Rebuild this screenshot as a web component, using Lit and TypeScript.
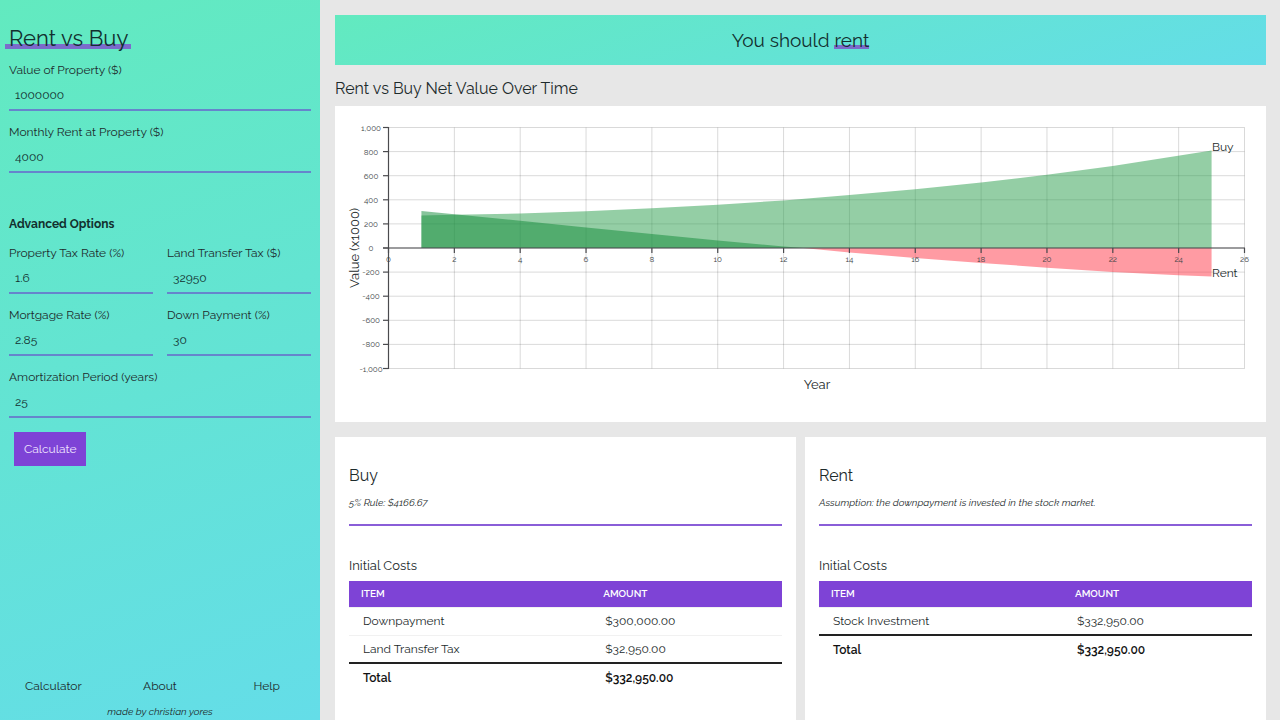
import { LitElement, html, svg, css } from "lit";
import { customElement, property } from "lit/decorators.js";

const FONT = css`Raleway, Lato, "Open Sans", sans-serif`;

type Point = [number, number];

const BUY: Point[] = [[1, 270], [2, 275], [4, 287], [6, 306], [8, 330], [10, 359], [12, 395], [14, 439], [16, 488], [18, 544], [20, 607], [22, 681], [25, 810]];
const RENT: Point[] = [[1, 307], [2, 280], [4, 226], [6, 171], [8, 116], [10, 63], [12, 13], [12.6, 0], [14, -37], [16, -82], [18, -124], [20, -163], [22, -200], [24, -226], [25, -236]];

@customElement("value-chart")
class ValueChart extends LitElement {
  static styles = css`
    :host { display: block; }
    .plot { display: block; width: 100%; font-family: ${FONT}; fill: #1d2b2c; }
    .grid { stroke: #000; stroke-opacity: 0.15; stroke-width: 1; }
    .axis { stroke: #4a4a4e; stroke-width: 1.2; }
    .buy { fill: rgb(41, 157, 75); fill-opacity: 0.5; }
    .rent { fill: rgb(16, 138, 55); fill-opacity: 0.5; }
    .loss { fill: rgb(255, 55, 71); fill-opacity: 0.5; }
    .tick { font-size: 8px; fill: #3c4446; text-anchor: middle; }
    .series { font-size: 12px; }
    .name { font-size: 13px; text-anchor: middle; }
  `;

  private x(v: number) { return 53.5 + (v * 856) / 26; }
  private y(v: number) { return 142 - (v * 241) / 2000; }

  private area(points: Point[]) {
    const first = points[0][0];
    const last = points[points.length - 1][0];
    return [[first, 0], ...points, [last, 0]].map(([a, b]) => `${this.x(a)},${this.y(b)}`).join(" ");
  }

  render() {
    const xs = Array.from({ length: 14 }, (_, i) => i * 2);
    const ys = Array.from({ length: 11 }, (_, i) => 1000 - i * 200);
    return html`
      <svg class="plot" viewBox="0 0 931 316" role="img" aria-label="Rent vs Buy Net Value Over Time">
        ${xs.map((v) => svg`<line class="grid" x1=${this.x(v)} x2=${this.x(v)} y1="21.5" y2="262.5" />`)}
        ${ys.map((v) => svg`<line class="grid" x1="53.5" x2="909.5" y1=${this.y(v)} y2=${this.y(v)} />`)}
        <polygon class="buy" points=${this.area(BUY)} />
        <polygon class="rent" points=${this.area(RENT.filter((p) => p[1] >= 0))} />
        <polygon class="loss" points=${this.area(RENT.filter((p) => p[1] <= 0))} />
        <line class="axis" x1="53.5" x2="53.5" y1="21" y2="263" />
        <line class="axis" x1="48" x2="910" y1="142" y2="142" />
        ${ys.map((v) => svg`
          <line class="axis" x1="48" x2="53.5" y1=${this.y(v)} y2=${this.y(v)} />
          <text class="tick" x="36" y=${this.y(v) + 3}>${v.toLocaleString("en-US")}</text>`)}
        ${xs.map((v) => svg`
          <line class="axis" x1=${this.x(v)} x2=${this.x(v)} y1="142" y2="147" />
          <text class="tick" x=${this.x(v)} y="156">${v}</text>`)}
        <text class="series" x="877" y="45">Buy</text>
        <text class="series" x="877" y="171">Rent</text>
        <text class="name" x="482" y="283">Year</text>
        <text class="name" transform="translate(24 142) rotate(-90)">Value (x1000)</text>
      </svg>
    `;
  }
}

@customElement("cost-card")
class CostCard extends LitElement {
  @property() heading = "";
  @property() note = "";
  @property({ attribute: false }) rows: [string, string][] = [];
  @property() total = "";

  static styles = css`
    :host { display: block; background: #fff; padding: 24px 14px; box-sizing: border-box; }
    .title { margin: 0; font-size: 16px; line-height: 30px; font-weight: 400; }
    .note { margin: 2px 0 0; font-size: 10px; line-height: 20px; font-style: italic; }
    .rule { margin: 11px 0 0; border: 0; border-top: 2px solid #8a5ed8; }
    .costs { width: 100%; margin-top: 28px; border-collapse: collapse; font-size: 12px; }
    .caption { text-align: left; font-size: 13px; line-height: 24px; font-weight: 400; padding-bottom: 3px; }
    .head { height: 26px; padding: 0 12px; box-sizing: border-box; text-align: left; font-size: 10px; font-weight: 600; color: #fff; background: #7e43d6; text-transform: uppercase; }
    .cell { height: 28px; padding: 0 14px; box-sizing: border-box; text-align: left; font-weight: 400; border-top: 1px solid #f1f1f1; }
    .sum .cell { border-top: 2px solid #222; font-weight: 600; color: #111; }
  `;

  render() {
    return html`
      <h2 class="title">${this.heading}</h2>
      <p class="note">${this.note}</p>
      <hr class="rule" />
      <table class="costs">
        <caption class="caption">Initial Costs</caption>
        <thead>
          <tr><th class="head" scope="col">Item</th><th class="head" scope="col">Amount</th></tr>
        </thead>
        <tbody>
          ${this.rows.map(([name, amount]) => html`<tr><td class="cell">${name}</td><td class="cell">${amount}</td></tr>`)}
          <tr class="sum"><th class="cell" scope="row">Total</th><td class="cell">${this.total}</td></tr>
        </tbody>
      </table>
    `;
  }
}

@customElement("app-root")
class AppRoot extends LitElement {
  static styles = css`
    :host {
      display: grid;
      grid-template-columns: 1fr 3fr;
      height: 100vh;
      background: #e7e7e7;
      color: #1d2b2c;
      font-family: ${FONT};
      font-size: 12px;
    }
    .side {
      display: flex;
      flex-direction: column;
      min-width: 0;
      box-sizing: border-box;
      padding: 20px 9px 0;
      overflow: hidden;
      background: linear-gradient(160deg, #62eabf, #64dde8);
    }
    .brand { margin: 0; font-size: 22px; line-height: 36px; font-weight: 400; color: #12302f; }
    .mark { background: linear-gradient(transparent 73%, #7b6bcb 73%, #7b6bcb 93%, transparent 93%); }
    .brand .mark { margin-left: -4px; padding: 0 3px 0 4px; }
    .form { display: flex; flex-direction: column; margin-top: 4px; }
    .fields { display: grid; grid-template-columns: 1fr 1fr; gap: 11px 14px; margin: 0; padding: 0; border: 0; }
    .field { display: flex; flex-direction: column; min-width: 0; }
    .wide { grid-column: 1 / -1; }
    .label { line-height: 20px; }
    .input {
      height: 31px;
      min-width: 0;
      box-sizing: border-box;
      padding: 0 6px;
      border: 0;
      border-bottom: 2px solid #6685cc;
      border-radius: 0;
      outline: 0;
      background: none;
      color: #12302f;
      font: 12px ${FONT};
    }
    .advanced { margin: 41px 0 9px; font-size: 12px; line-height: 20px; font-weight: 700; color: #12302f; }
    .submit {
      align-self: flex-start;
      height: 34px;
      margin: 14px 5px;
      padding: 0 10px;
      border: 0;
      background: #7e43d6;
      color: #f0e6ff;
      font: 12px ${FONT};
    }
    .foot { margin: auto -9px 0; text-align: center; }
    .nav { display: grid; grid-template-columns: repeat(3, 1fr); line-height: 20px; }
    .link { color: inherit; text-decoration: none; }
    .credit { margin: 8px 0 0; font-size: 10px; line-height: 16px; font-style: italic; }
    .main { min-width: 0; box-sizing: border-box; padding: 15px 14px 0 15px; overflow-y: auto; scrollbar-width: none; display: flex; flex-direction: column; }
    .banner { padding: 7px 0; text-align: center; background: linear-gradient(160deg, #62eabf, #64dde8); }
    .verdict { margin: 0; font-size: 19px; line-height: 36px; font-weight: 400; color: #12302f; }
    .heading { margin: 9px 0 2px; font-size: 16px; line-height: 30px; font-weight: 400; }
    .chart { background: #fff; }
    .cards { flex: 1; display: grid; grid-template-columns: 1fr 1fr; gap: 9px; margin-top: 15px; }
  `;

  private field(id: string, label: string, value: string, wide = false) {
    return html`
      <div class="field ${wide ? "wide" : ""}">
        <label class="label" for=${id}>${label}</label>
        <input class="input" id=${id} type="text" inputmode="decimal" .value=${value} />
      </div>
    `;
  }

  render() {
    return html`
      <aside class="side">
        <h1 class="brand"><span class="mark">Rent vs Buy</span></h1>
        <form class="form" @submit=${(e: Event) => e.preventDefault()}>
          <div class="fields">
            ${this.field("value", "Value of Property ($)", "1000000", true)}
            ${this.field("rent", "Monthly Rent at Property ($)", "4000", true)}
          </div>
          <h2 class="advanced">Advanced Options</h2>
          <div class="fields">
            ${this.field("tax", "Property Tax Rate (%)", "1.6")}
            ${this.field("transfer", "Land Transfer Tax ($)", "32950")}
            ${this.field("mortgage", "Mortgage Rate (%)", "2.85")}
            ${this.field("down", "Down Payment (%)", "30")}
            ${this.field("years", "Amortization Period (years)", "25", true)}
          </div>
          <button class="submit" type="submit">Calculate</button>
        </form>
        <footer class="foot">
          <nav class="nav">
            <div><a class="link" href="#calculator">Calculator</a></div>
            <div><a class="link" href="#about">About</a></div>
            <div><a class="link" href="#help">Help</a></div>
          </nav>
          <p class="credit">made by christian yores</p>
        </footer>
      </aside>
      <main class="main">
        <div class="banner"><h2 class="verdict">You should <span class="mark">rent</span></h2></div>
        <h2 class="heading">Rent vs Buy Net Value Over Time</h2>
        <value-chart class="chart"></value-chart>
        <div class="cards">
          <cost-card
            heading="Buy"
            note="5% Rule: $4166.67"
            .rows=${[["Downpayment", "$300,000.00"], ["Land Transfer Tax", "$32,950.00"]]}
            total="$332,950.00"
          ></cost-card>
          <cost-card
            heading="Rent"
            note="Assumption: the downpayment is invested in the stock market."
            .rows=${[["Stock Investment", "$332,950.00"]]}
            total="$332,950.00"
          ></cost-card>
        </div>
      </main>
    `;
  }
}
